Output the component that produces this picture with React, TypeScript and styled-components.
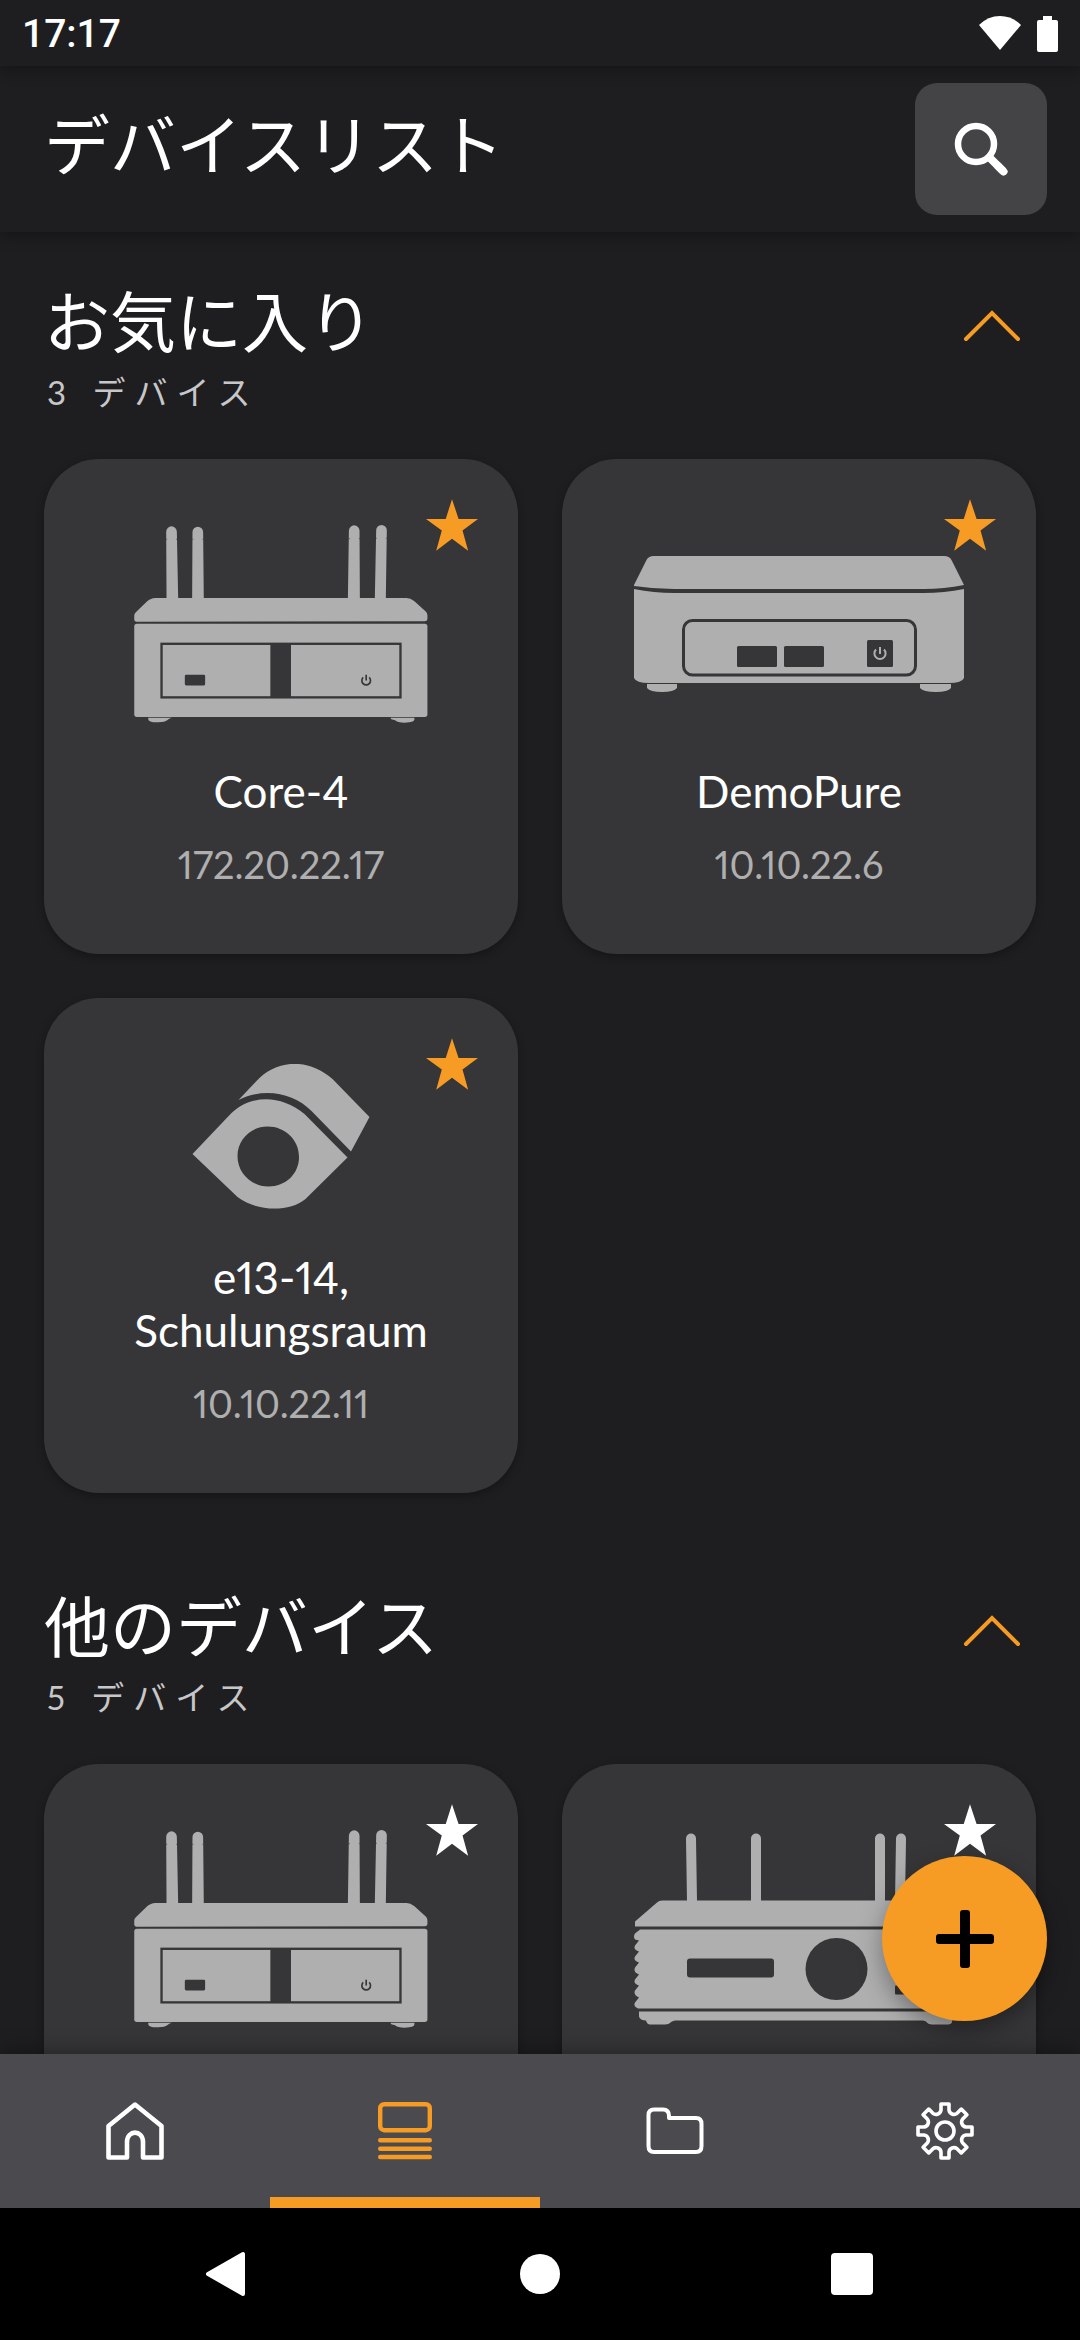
import React, { useState } from "react";
import styled, { createGlobalStyle } from "styled-components";

const color = {
  page: "#1e1e20",
  card: "#363638",
  device: "#afafaf",
  accent: "#f69b24",
  nav: "#4a4a4f",
  control: "#444446",
  text: "#ffffff",
  muted: "#afafaf",
  count: "#c7c7ca",
};

const GlobalStyle = createGlobalStyle`
  * { box-sizing: border-box; }
  body {
    margin: 0;
    background: ${color.page};
    color: ${color.text};
    font-family: Lato, "Noto Sans CJK JP", sans-serif;
    font-variant-numeric: proportional-nums;
  }
  h1, h2, h3, p, ul { margin: 0; padding: 0; font-weight: 400; }
  ul { list-style: none; }
  button { border: 0; padding: 0; background: none; color: inherit; font: inherit; cursor: pointer; }
  svg { display: block; }
`;

const Screen = styled.div`
  display: flex;
  flex-direction: column;
  height: 100vh;
  overflow: hidden;
`;

const StatusBar = styled.div`
  position: relative;
  z-index: 3;
  display: flex;
  align-items: center;
  justify-content: space-between;
  flex: none;
  height: 66px;
  padding: 2px 22px 0;
  background: ${color.page};
  box-shadow: 0 4px 14px rgba(0, 0, 0, 0.3);
`;

const Clock = styled.time`
  font: 500 39px/48px Roboto, sans-serif;
`;

const StatusIcons = styled.div`
  display: flex;
  gap: 16px;
`;

const Header = styled.header`
  position: relative;
  z-index: 2;
  display: flex;
  align-items: center;
  justify-content: space-between;
  flex: none;
  height: 166px;
  padding: 0 33px 0 44px;
  background: ${color.page};
  box-shadow: 0 4px 14px rgba(0, 0, 0, 0.3);
`;

const PageTitle = styled.h1`
  padding-bottom: 8px;
  font-size: 66px;
  line-height: 80px;
`;

const SearchButton = styled.button`
  display: grid;
  place-items: center;
  width: 132px;
  height: 132px;
  border-radius: 22px;
  background: ${color.control};
`;

const Content = styled.div`
  position: relative;
  flex: 1;
  min-height: 0;
`;

const DeviceLists = styled.main`
  height: 100%;
  overflow: hidden;
`;

const Section = styled.section`
  padding: 44px;
  & + & { padding-top: 44px; }
`;

const SectionHead = styled.div`
  display: flex;
  align-items: flex-start;
  justify-content: space-between;
  height: 183px;
`;

const SectionText = styled.div`
  padding-top: 6px;
`;

const SectionTitle = styled.h2`
  font-size: 66px;
  line-height: 80px;
`;

const DeviceCount = styled.p`
  padding-left: 3px;
  color: ${color.count};
  font-size: 33px;
  line-height: 60px;
  letter-spacing: 9px;
`;

const CollapseButton = styled.button<{ $open: boolean }>`
  display: grid;
  place-items: center;
  width: 88px;
  height: 100px;
  svg { transform: ${(p) => (p.$open ? "none" : "rotate(180deg)")}; }
`;

const CardGrid = styled.ul`
  display: grid;
  grid-template-columns: 1fr 1fr;
  gap: 44px;
`;

const Card = styled.li`
  position: relative;
  display: flex;
  flex-direction: column;
  height: 495px;
  padding: 66px 72px 68px;
  border-radius: 55px;
  background: ${color.card};
  box-shadow: 0 3px 8px rgba(0, 0, 0, 0.3);
  text-align: center;
`;

const Picture = styled.div`
  flex: 1;
  min-height: 0;
  svg { width: 100%; height: 100%; }
`;

const DeviceName = styled.h3`
  margin-top: 42px;
  font-size: 44px;
  line-height: 53px;
`;

const Address = styled.p`
  margin-top: 24px;
  color: ${color.muted};
  font-size: 38px;
  line-height: 44px;
`;

const StarButton = styled.button<{ $on: boolean }>`
  position: absolute;
  top: 40px;
  right: 40px;
  color: ${(p) => (p.$on ? color.accent : color.text)};
`;

const AddButton = styled.button`
  position: absolute;
  right: 33px;
  bottom: 33px;
  display: grid;
  place-items: center;
  width: 165px;
  height: 165px;
  border-radius: 50%;
  background: ${color.accent};
  box-shadow: 0 10px 24px rgba(0, 0, 0, 0.35);
`;

const TabBar = styled.nav`
  position: relative;
  z-index: 2;
  display: grid;
  grid-template-columns: repeat(4, 1fr);
  flex: none;
  height: 154px;
  background: ${color.nav};
  box-shadow: 0 -4px 20px rgba(0, 0, 0, 0.3);
`;

const Tab = styled.a<{ $active: boolean }>`
  display: grid;
  place-items: center;
  color: ${(p) => (p.$active ? color.accent : color.text)};
  box-shadow: ${(p) => (p.$active ? `inset 0 -11px ${color.accent}` : "none")};
`;

const SystemBar = styled.div`
  position: relative;
  z-index: 3;
  display: flex;
  justify-content: center;
  flex: none;
  height: 132px;
  background: #000;
`;

const SystemButton = styled.button`
  display: grid;
  place-items: center;
  width: 312px;
`;

const CoreDevice = () => (
  <svg viewBox="282 225 882 595" fill={color.device} aria-hidden="true">
    <path d="M378 245a16 16 0 0 1 32 0L414 446H379Z" />
    <path d="M457 246a16 16 0 0 1 32 0L491 446H456Z" />
    <path d="M927 242a16 16 0 0 1 32 0L960 446H924Z" />
    <path d="M1009 241a16 16 0 0 1 32 0L1038 446H1005Z" />
    <path d="M378 268H381M408 268H411M457 268H460M487 268H490M927 266H930M957 266H960M1008 265H1011M1038 265H1041" stroke={color.card} strokeWidth="2" />
    <path d="M288 516Q282 515 282 509V497Q282 492 286 488L320 455Q332 444 345 444H1100Q1112 444 1124 454L1158 485Q1163 490 1163 496V507Q1163 514 1155 514Z" />
    <rect x="282" y="522" width="881" height="280" rx="8" />
    <path d="M324 804H395Q386 806 381 812Q374 818 355 818Q324 819 324 808ZM1053 804H1124V809Q1124 819 1095 819Q1072 819 1066 812Q1060 810 1053 808Z" />
    <rect x="364" y="582" width="718" height="161" fill="none" stroke={color.card} strokeWidth="7" />
    <rect x="691" y="580" width="62" height="164" fill={color.card} />
    <rect x="434" y="675" width="61" height="32" rx="4" fill={color.card} />
    <path d="M970 683A13 13 0 1 0 988 683M979 675V692" fill="none" stroke={color.card} strokeWidth="5" />
  </svg>
);

const PureDevice = () => (
  <svg viewBox="0 0 330 136" fill={color.device} aria-hidden="true">
    <path d="M0 29L12 5Q14 0 20 0H310Q316 0 318 5L330 29Q310 33 290 33H40Q20 33 0 30Z" />
    <path d="M0 33Q20 37 40 37H290Q310 37 330 33V122Q328 127 315 127H15Q2 127 0 122Z" />
    <path d="M13 128H43V132Q40 136 28 136Q16 136 13 132ZM286 128H317V132Q314 136 302 136Q289 136 286 132Z" />
    <rect x="49.500" y="64.500" width="232" height="54.500" rx="9" fill="none" stroke={color.card} strokeWidth="3" />
    <rect x="103" y="90" width="40" height="21" rx="1.500" fill={color.card} />
    <rect x="150" y="90" width="40" height="21" rx="1.500" fill={color.card} />
    <rect x="233" y="84" width="26" height="27" rx="1.500" fill={color.card} />
    <path d="M242 93.500A5.600 5.600 0 1 0 250 93.500M246 91V98" fill="none" stroke={color.device} strokeWidth="2" />
  </svg>
);

const EyeDevice = () => (
  <svg viewBox="0 0 177 145" fill={color.device} aria-hidden="true">
    <path d="M46 36L64 17C83-4 115-7 140 15L177 53L158.500 87.500L119 47C101 29 72 23 46 36Z" />
    <path
      fillRule="evenodd"
      d="M0 90L39 49C58 31 88 30 112 50L155 93.500L113 135C96 149 63 147 45 133ZM45 92C45 110 60 122.500 76 122.500C93 122.500 106.500 110 106.500 93C106.500 76 93 62.500 75 62.500C58 62.500 45 76 45 92Z"
    />
  </svg>
);

const RouterDevice = () => (
  <svg viewBox="0 0 330 191" fill={color.device} aria-hidden="true">
    <path d="M52 5a5 5 0 0 1 10 0L63 68H53ZM117 5a5 5 0 0 1 10 0V68H117ZM241 5a5 5 0 0 1 10 0V68H241ZM262 5a5 5 0 0 1 10 0L271 68H261Z" />
    <path d="M1 93V88L23 69Q25 67 28 67H302Q305 67 307 69L329 88V93Z" />
    <path d="M6 96H324L329 100Q331 103 329 106L325 107L329 112Q331 116 325 118L329 123Q331 127 325 129L329 134Q331 139 325 141L329 146Q331 150 325 152L329 157Q331 161 325 164L329 169Q331 173 326 175H4Q-1 173 1 169L5 164Q-1 161 1 157L5 152Q-1 150 1 146L5 141Q-1 139 1 134L5 129Q-1 127 1 123L5 118Q-1 116 1 112L5 107L1 106Q-1 103 1 100Z" />
    <path d="M5 178H325V184Q323 187 318 187V189Q317 191 314 191H298Q294 191 292 188L289 187H41L38 188Q35 191 31 191H16Q13 191 12 187Q6 187 5 183Z" />
    <rect x="53" y="125" width="87" height="19" rx="3" fill={color.card} />
    <circle cx="202.500" cy="135.500" r="31" fill={color.card} />
    <rect x="261" y="152" width="20" height="9" rx="1" fill={color.card} />
  </svg>
);

const pictures = {
  core: CoreDevice,
  pure: PureDevice,
  eye: EyeDevice,
  router: RouterDevice,
};

const Star = () => (
  <svg width="52" height="52" viewBox="0 0 158 157" fill="currentColor" aria-hidden="true">
    <path d="M79 0L99 60H158L111 95L128 157L79 120L31 157L48 95L0 60H60Z" />
  </svg>
);

const HomeIcon = () => (
  <svg width="58" height="58" viewBox="0 0 58 58" fill="none" stroke="currentColor" strokeWidth="4.600" strokeLinejoin="round" aria-hidden="true">
    <path d="M29 2.500L2.500 24V55.500H21V40C21 27.500 37 27.500 37 40V55.500H55.500V24Z" />
  </svg>
);

const ListIcon = () => (
  <svg width="58" height="58" viewBox="0 0 58 58" fill="none" stroke="currentColor" strokeWidth="4.400" strokeLinecap="round" aria-hidden="true">
    <rect x="4.200" y="2.200" width="49.600" height="26" rx="4" />
    <path d="M4.200 38.300H53.800M4.200 46.700H53.800M4.200 55H53.800" />
  </svg>
);

const FolderIcon = () => (
  <svg width="58" height="58" viewBox="0 0 58 58" fill="none" stroke="currentColor" strokeWidth="4" strokeLinejoin="round" aria-hidden="true">
    <path d="M2.500 13Q2.500 7.500 8 7.500H17Q23 7.500 23 14V16H50Q55.500 16 55.500 22V44Q55.500 50 50 50H8Q2.500 50 2.500 44Z" />
  </svg>
);

const turn = (x: number, y: number, step: number) => {
  const a = (step * Math.PI) / 4;
  const px = x * Math.cos(a) - y * Math.sin(a);
  const py = x * Math.sin(a) + y * Math.cos(a);
  return `${px.toFixed(2)} ${py.toFixed(2)}`;
};

const gearPath =
  Array.from({ length: 8 }, (_, i) =>
    [
      `${i ? "L" : "M"}${turn(-4, -27, i)}`,
      `L${turn(4, -27, i)}`,
      `L${turn(4, -21, i)}`,
      `A5 5 0 0 0 ${turn(-4, -21, i + 1)}`,
    ].join("")
  ).join("") + "Z";

const GearIcon = () => (
  <svg width="58" height="58" viewBox="-29 -29 58 58" fill="none" stroke="currentColor" strokeWidth="3.600" strokeLinejoin="round" aria-hidden="true">
    <path d={gearPath} />
    <circle r="9" />
  </svg>
);

const tabs = [
  { label: "ホーム", Icon: HomeIcon },
  { label: "デバイス", Icon: ListIcon },
  { label: "フォルダ", Icon: FolderIcon },
  { label: "設定", Icon: GearIcon },
];

type Device = {
  name: string;
  address: string;
  picture: keyof typeof pictures;
  favourite: boolean;
};

const favourites: Device[] = [
  { name: "Core-4", address: "172.20.22.17", picture: "core", favourite: true },
  { name: "DemoPure", address: "10.10.22.6", picture: "pure", favourite: true },
  { name: "e13-14, Schulungsraum", address: "10.10.22.11", picture: "eye", favourite: true },
];

const others: Device[] = [
  { name: "", address: "", picture: "core", favourite: false },
  { name: "", address: "", picture: "router", favourite: false },
];

function DeviceCard({ device }: { device: Device }) {
  const Drawing = pictures[device.picture];
  return (
    <Card>
      <Picture>
        <Drawing />
      </Picture>
      <DeviceName>{device.name || "\u00a0"}</DeviceName>
      <Address>{device.address || "\u00a0"}</Address>
      <StarButton $on={device.favourite} aria-label="お気に入り" aria-pressed={device.favourite}>
        <Star />
      </StarButton>
    </Card>
  );
}

function DeviceSection({ title, count, devices }: { title: string; count: number; devices: Device[] }) {
  const [open, setOpen] = useState(true);
  return (
    <Section>
      <SectionHead>
        <SectionText>
          <SectionTitle>{title}</SectionTitle>
          <DeviceCount>{count} デバイス</DeviceCount>
        </SectionText>
        <CollapseButton $open={open} aria-label={title} aria-expanded={open} onClick={() => setOpen(!open)}>
          <svg width="58" height="32" viewBox="0 0 58 32" fill="none" stroke={color.accent} strokeWidth="4" strokeLinecap="round" aria-hidden="true">
            <path d="M3 29L29 3L55 29" />
          </svg>
        </CollapseButton>
      </SectionHead>
      {open && (
        <CardGrid>
          {devices.map((device, i) => (
            <DeviceCard key={i} device={device} />
          ))}
        </CardGrid>
      )}
    </Section>
  );
}

export default function App() {
  return (
    <Screen lang="ja">
      <GlobalStyle />
      <StatusBar>
        <Clock>17:17</Clock>
        <StatusIcons>
          <svg width="42" height="36" viewBox="0 0 42 36" fill="#fff" aria-hidden="true">
            <path d="M0 9Q9 0 21 0Q33 0 42 9L21 34Z" />
          </svg>
          <svg width="21" height="36" viewBox="0 0 21 36" fill="#fff" aria-hidden="true">
            <path d="M6 0H15V4H19Q21 4 21 6V34Q21 36 19 36H2Q0 36 0 34V6Q0 4 2 4H6Z" />
          </svg>
        </StatusIcons>
      </StatusBar>
      <Header>
        <PageTitle>デバイスリスト</PageTitle>
        <SearchButton aria-label="検索">
          <svg width="54" height="54" viewBox="0 0 54 54" fill="none" stroke="#fff" aria-hidden="true">
            <circle cx="22" cy="22" r="18" strokeWidth="6.500" />
            <path d="M34 34L49 49" strokeWidth="8" />
            <path d="M44 44L49.500 49.500" strokeWidth="8" strokeLinecap="round" />
          </svg>
        </SearchButton>
      </Header>
      <Content>
        <DeviceLists>
          <DeviceSection title="お気に入り" count={3} devices={favourites} />
          <DeviceSection title="他のデバイス" count={5} devices={others} />
        </DeviceLists>
        <AddButton aria-label="デバイスを追加">
          <svg width="58" height="58" viewBox="0 0 58 58" aria-hidden="true">
            <rect x="24" width="10" height="58" rx="3" />
            <rect y="24" width="58" height="10" rx="3" />
          </svg>
        </AddButton>
      </Content>
      <TabBar>
        {tabs.map(({ label, Icon }, i) => (
          <Tab key={label} href="#" aria-label={label} aria-current={i === 1 ? "page" : undefined} $active={i === 1}>
            <Icon />
          </Tab>
        ))}
      </TabBar>
      <SystemBar>
        <SystemButton aria-label="戻る">
          <svg width="46" height="46" viewBox="0 0 46 46" fill="#fff" stroke="#fff" strokeWidth="4" strokeLinejoin="round" aria-hidden="true">
            <path d="M3 23L38 3V43Z" />
          </svg>
        </SystemButton>
        <SystemButton aria-label="ホーム画面">
          <svg width="40" height="40" viewBox="0 0 40 40" fill="#fff" aria-hidden="true">
            <circle cx="20" cy="20" r="20" />
          </svg>
        </SystemButton>
        <SystemButton aria-label="最近使ったアプリ">
          <svg width="42" height="42" viewBox="0 0 42 42" fill="#fff" aria-hidden="true">
            <rect width="42" height="42" rx="4" />
          </svg>
        </SystemButton>
      </SystemBar>
    </Screen>
  );
}
